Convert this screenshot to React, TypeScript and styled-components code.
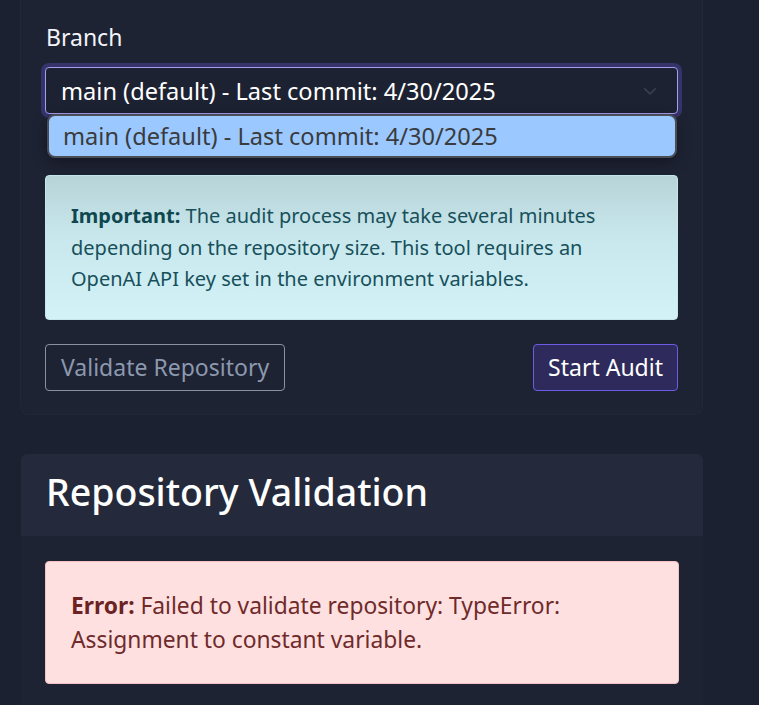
import React from "react";
import styled, { createGlobalStyle } from "styled-components";

const Global = createGlobalStyle`
  html, body {
    margin: 0;
    padding: 0;
    background: #1c2131;
    font-family: "Noto Sans", "Open Sans", sans-serif;
  }
  * { box-sizing: border-box; }
`;

const Page = styled.div`
  width: 759px;
  height: 705px;
  overflow: hidden;
  padding: 0 56px 0 20px;
  display: flex;
  flex-direction: column;
  gap: 39px;
`;

const Card = styled.section`
  background: #1e2334;
  border: 1px solid #222738;
  border-top: none;
  border-radius: 0 0 8px 8px;
  padding: 22px 24px 23px;
`;

const Label = styled.div`
  color: #f2f4f8;
  font-size: 23px;
  line-height: 30px;
  margin-left: 1px;
  margin-bottom: 15px;
`;

const SelectWrap = styled.div`
  position: relative;
`;

const SelectBox = styled.div`
  height: 47px;
  border: 1px solid #a69cf0;
  border-radius: 4px;
  box-shadow: 0 0 0 4px #35336a;
  background: #1d2232;
  color: #ffffff;
  font-size: 23.6px;
  display: flex;
  align-items: center;
  justify-content: space-between;
  padding: 0 18px 0 15px;
`;

const Chevron = styled.svg`
  width: 18px;
  height: 18px;
  color: #3c4253;
`;

const Dropdown = styled.div`
  position: absolute;
  top: 100%;
  left: 2px;
  right: 1px;
  height: 44px;
  background: #9bc9ff;
  border: 2px solid #4a4d56;
  border-radius: 8px;
  color: #3a3b3e;
  font-size: 23.6px;
  display: flex;
  align-items: center;
  padding-left: 14px;
  box-shadow: 0 4px 14px rgba(0, 0, 0, 0.35);
  z-index: 2;
`;

const Alert = styled.div<{ $tone: "info" | "error" }>`
  border-radius: 4px;
  padding: ${(p) => (p.$tone === "info" ? "24px 25px" : "27px 25px 26px")};
  font-size: ${(p) => (p.$tone === "info" ? "20px" : "22.8px")};
  line-height: ${(p) => (p.$tone === "info" ? "31.5px" : "34px")};
  color: ${(p) => (p.$tone === "info" ? "#17505a" : "#6f2a2a")};
  background: ${(p) =>
    p.$tone === "info"
      ? "linear-gradient(180deg, #b7d4d8 0%, #c9e8ed 45%, #d2f2f7 100%)"
      : "#fee0e1"};
  border: 1px solid ${(p) => (p.$tone === "info" ? "#c6e6ea" : "#f3c1c4")};
  strong {
    font-weight: 700;
    color: ${(p) => (p.$tone === "info" ? "#0f4750" : "#6a2222")};
  }
`;

const InfoSpacer = styled.div`
  margin-top: 61px;
`;

const Actions = styled.div`
  margin-top: 24px;
  display: flex;
  justify-content: space-between;
`;

const Button = styled.button<{ $primary?: boolean }>`
  height: 47px;
  border-radius: 4px;
  font-family: inherit;
  font-size: 23px;
  padding: 0 ${(p) => (p.$primary ? "14px" : "15px")};
  cursor: pointer;
  border: 1px solid ${(p) => (p.$primary ? "#6b5ce6" : "#8891a4")};
  background: ${(p) => (p.$primary ? "#2e2b5c" : "transparent")};
  color: ${(p) => (p.$primary ? "#ffffff" : "#8c98ad")};
`;

const Section = styled.section`
  background: #1e2334;
  border-radius: 6px;
  margin-left: 1px;
`;

const SectionHeader = styled.header`
  height: 82px;
  background: #242a3b;
  border-radius: 6px 6px 0 0;
  display: flex;
  align-items: center;
  padding: 0 25px 6px;
`;

const Title = styled.h2`
  margin: 0;
  color: #ffffff;
  font-size: 37.5px;
  font-weight: 500;
`;

const SectionBody = styled.div`
  padding: 25px 24px 24px;
`;

export default function App() {
  return (
    <>
      <Global />
      <Page>
        <Card>
          <Label>Branch</Label>
          <SelectWrap>
            <SelectBox>
              <span>main (default) - Last commit: 4/30/2025</span>
              <Chevron viewBox="0 0 24 24" fill="none" stroke="currentColor" strokeWidth="2" strokeLinecap="round" strokeLinejoin="round">
                <path d="M5 9l7 7 7-7" />
              </Chevron>
            </SelectBox>
            <Dropdown>main (default) - Last commit: 4/30/2025</Dropdown>
          </SelectWrap>
          <InfoSpacer>
            <Alert $tone="info">
              <strong>Important:</strong> The audit process may take several minutes
              <br />
              depending on the repository size. This tool requires an
              <br />
              OpenAI API key set in the environment variables.
            </Alert>
          </InfoSpacer>
          <Actions>
            <Button>Validate Repository</Button>
            <Button $primary>Start Audit</Button>
          </Actions>
        </Card>
        <Section>
          <SectionHeader>
            <Title>Repository Validation</Title>
          </SectionHeader>
          <SectionBody>
            <Alert $tone="error">
              <strong>Error:</strong> Failed to validate repository: TypeError:
              <br />
              Assignment to constant variable.
            </Alert>
          </SectionBody>
        </Section>
      </Page>
    </>
  );
}
